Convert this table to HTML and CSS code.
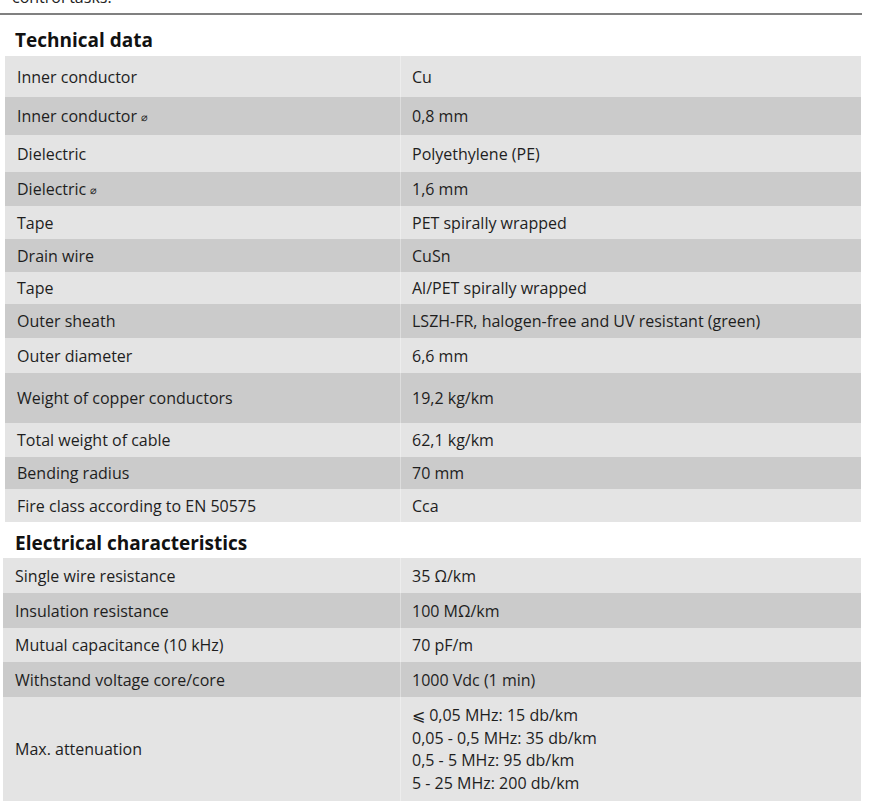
FILE: index.html
```html
<!DOCTYPE html>
<html lang="en">
<head>
<meta charset="utf-8">
<title>Technical data</title>
<link rel="stylesheet" href="styles.css">
</head>
<body>
<div class="page">
  <p class="intro">control tasks.</p>
  <hr class="rule">
  <h2 class="section-title">Technical data</h2>
  <table class="spec spec-tech">
    <tbody>
      <tr class="light h41"><td>Inner conductor</td><td>Cu</td></tr>
      <tr class="dark h38"><td>Inner conductor <span class="dia">⌀</span></td><td>0,8 mm</td></tr>
      <tr class="light h37"><td>Dielectric</td><td>Polyethylene (PE)</td></tr>
      <tr class="dark h34"><td>Dielectric <span class="dia">⌀</span></td><td>1,6 mm</td></tr>
      <tr class="light h33"><td>Tape</td><td>PET spirally wrapped</td></tr>
      <tr class="dark h33"><td>Drain wire</td><td>CuSn</td></tr>
      <tr class="light h32"><td>Tape</td><td>Al/PET spirally wrapped</td></tr>
      <tr class="dark h34"><td>Outer sheath</td><td>LSZH-FR, halogen-free and UV resistant (green)</td></tr>
      <tr class="light h35"><td>Outer diameter</td><td>6,6 mm</td></tr>
      <tr class="dark h50"><td>Weight of copper conductors</td><td>19,2 kg/km</td></tr>
      <tr class="light h34"><td>Total weight of cable</td><td>62,1 kg/km</td></tr>
      <tr class="dark h32"><td>Bending radius</td><td>70 mm</td></tr>
      <tr class="light h33"><td>Fire class according to EN 50575</td><td>Cca</td></tr>
    </tbody>
  </table>
  <h2 class="section-title">Electrical characteristics</h2>
  <table class="spec spec-elec">
    <tbody>
      <tr class="light h35"><td>Single wire resistance</td><td>35 Ω/km</td></tr>
      <tr class="dark h35"><td>Insulation resistance</td><td>100 MΩ/km</td></tr>
      <tr class="light h34"><td>Mutual capacitance (10 kHz)</td><td>70 pF/m</td></tr>
      <tr class="dark h35"><td>Withstand voltage core/core</td><td>1000 Vdc (1 min)</td></tr>
      <tr class="light multi"><td>Max. attenuation</td><td>⩽ 0,05 MHz: 15 db/km<br>0,05 - 0,5 MHz: 35 db/km<br>0,5 - 5 MHz: 95 db/km<br>5 - 25 MHz: 200 db/km</td></tr>
    </tbody>
  </table>
</div>
</body>
</html>
```

FILE: styles.css
```css
html, body {
  margin: 0;
  padding: 0;
  background: #ffffff;
}

body {
  font-family: "Open Sans", "Noto Sans", "Liberation Sans", sans-serif;
  font-size: 16px;
  color: #1e1e1e;
  overflow: hidden;
}

.page {
  width: 875px;
  padding-top: 1px;
}

.intro {
  margin: -15px 0 0 12px;
  height: 22px;
  line-height: 22px;
  font-size: 16px;
  color: #222222;
}

.rule {
  margin: 5px 0 0 0;
  width: 862px;
  height: 2px;
  border: 0;
  background: #808080;
}

.section-title {
  margin: 0;
  padding: 0 0 0 15px;
  height: 41px;
  line-height: 51px;
  font-size: 19px;
  font-weight: 700;
  color: #111111;
}

.spec-tech + .section-title {
  height: 36px;
  line-height: 42px;
}

.spec {
  border-collapse: collapse;
  border-spacing: 0;
  table-layout: fixed;
}

.spec-tech {
  margin-left: 5px;
  width: 856px;
}

.spec-tech td:first-child {
  width: 383px;
}

.spec-elec {
  margin-left: 3px;
  width: 858px;
}

.spec-elec td:first-child {
  width: 385px;
}

.spec td {
  padding: 0 0 0 12px;
  vertical-align: middle;
  line-height: 22px;
}

.spec td + td {
  padding-left: 11px;
  border-left: 1px solid rgba(255, 255, 255, 0.35);
}

.light td {
  background: #e4e4e4;
}

.dark td {
  background: #cbcbcb;
}

.dia {
  font-size: 11px;
  vertical-align: 1px;
}

.h32 { height: 32px; }
.h33 { height: 33px; }
.h34 { height: 34px; }
.h35 { height: 35px; }
.h37 { height: 37px; }
.h38 { height: 38px; }
.h41 { height: 41px; }
.h50 { height: 50px; }

.multi td {
  padding-top: 7px;
  padding-bottom: 8px;
  line-height: 22.6px;
}
```
